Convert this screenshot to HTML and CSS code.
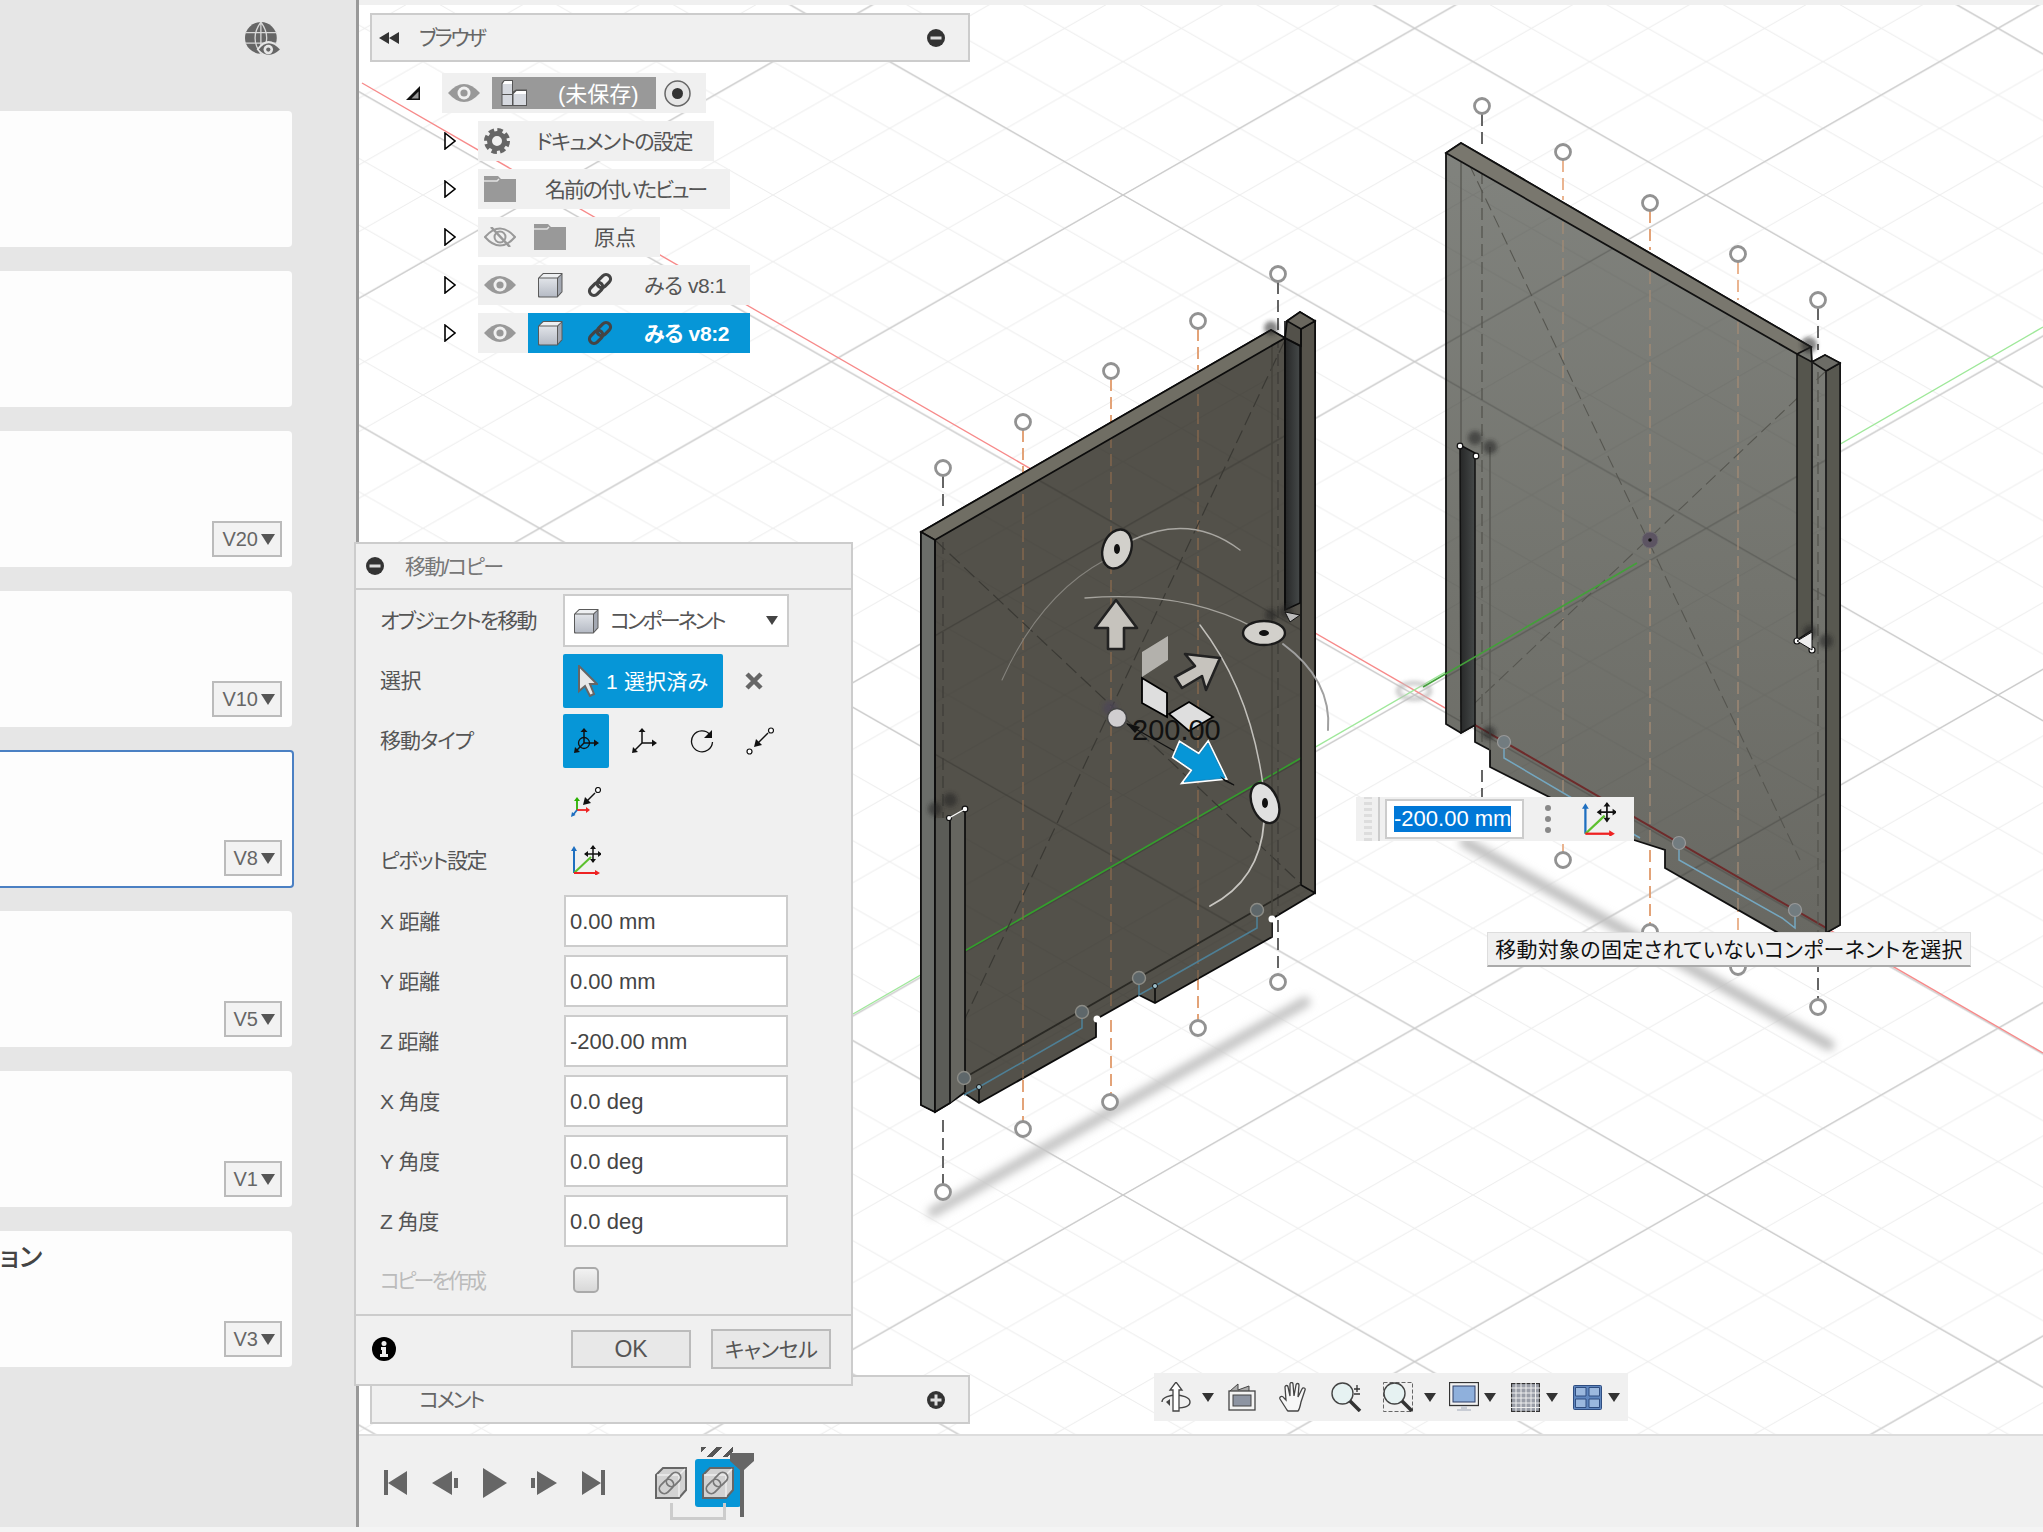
FILE: index.html
```html
<!DOCTYPE html>
<html lang="ja">
<head>
    <meta charset="UTF-8" />
    <title>移動/コピー</title>
    <link rel="stylesheet" href="styles.css">
</head>
<body>
<svg class="defs" width="0" height="0">
    <defs>
        <linearGradient id="cubeFront" x1="0" y1="0" x2="0" y2="1"><stop offset="0" stop-color="#e0e3e8"/><stop offset="1" stop-color="#b6bbc5"/></linearGradient>
        <symbol id="i-eye" viewBox="0 0 32 20"><path d="M0 10Q16-8 32 10Q16 28 0 10Z" fill="#999"/><circle cx="16" cy="10" r="6.5" fill="#f0f0f0"/><circle cx="16" cy="10" r="3.6" fill="#999"/></symbol>
        <symbol id="i-eye-off" viewBox="0 0 32 20"><path d="M1 10Q16-7 31 10Q16 27 1 10Z" fill="none" stroke="#999" stroke-width="2"/><circle cx="16" cy="10" r="5.5" fill="none" stroke="#999" stroke-width="2"/><path d="M7 0L26 20" stroke="#999" stroke-width="2.5"/></symbol>
        <symbol id="i-folder" viewBox="0 0 32 26"><path d="M0 26V0H14L17 3H32V26Z" fill="#999"/><path d="M0 5H13L15 3" fill="none" stroke="#e2e2e2" stroke-width="1.5"/></symbol>
        <symbol id="i-gear" viewBox="0 0 26 26"><circle cx="13" cy="13" r="11" fill="none" stroke="#666" stroke-width="4" stroke-dasharray="5.4 3.24"/><circle cx="13" cy="13" r="7.5" fill="none" stroke="#666" stroke-width="5"/></symbol>
        <symbol id="i-cube" viewBox="0 0 26 26"><path d="M1 6L6 1H25.500V20L20.500 25.500H2Q1 25.500 1 24.500Z" fill="#5a5a5a"/><path d="M2 6.500H20V24.500H3Q2 24.500 2 23.500Z" fill="url(#cubeFront)"/><path d="M2.800 5.500L6.500 2H24.200L20.300 5.500Z" fill="#eef0f2"/><path d="M21 6.200L24.500 2.800V19.500L21 23.500Z" fill="#a3a8b2"/></symbol>
        <symbol id="i-assy" viewBox="0 0 28 28"><path d="M1.500 4L4 1H13V12.500L16 10.500H27V27H1.500Z" fill="#555"/><path d="M2.500 5H12V15H2.500ZM2.500 16H12V26H2.500ZM13.500 15H26V26H13.500Z" fill="#d6d9df"/><path d="M2.500 5L4.500 2H12V5ZM13.500 15L16.500 12H26V15Z" fill="#fff"/></symbol>
        <symbol id="i-link" viewBox="0 0 26 26"><g transform="rotate(-45 13 13)" fill="none" stroke="#444" stroke-width="3.200"><rect x="0" y="8.500" width="15" height="9" rx="4.500"/><rect x="11" y="8.500" width="15" height="9" rx="4.500"/></g></symbol>
        <symbol id="i-minus" viewBox="0 0 20 20"><circle cx="10" cy="10" r="9" fill="#333"/><rect x="4.500" y="8.500" width="11" height="3" fill="#ddd"/></symbol>
        <symbol id="i-plus" viewBox="0 0 20 20"><circle cx="10" cy="10" r="9" fill="#333"/><path d="M4.500 10H15.500M10 4.500V15.500" stroke="#ddd" stroke-width="3"/></symbol>
        <symbol id="i-twist" viewBox="0 0 12 18"><path d="M1 1L11 9L1 17Z" fill="#fff" stroke="#000" stroke-width="1.600"/></symbol>
        <symbol id="i-pivot" viewBox="0 0 30 30"><path d="M3 28V4" stroke="#1e6fc0" stroke-width="2"/><path d="M0 6L3 1L6 6Z" fill="#1e6fc0"/><path d="M3 28L20 12" stroke="#5cc02e" stroke-width="2"/><path d="M3 28H26" stroke="#e22" stroke-width="2"/><path d="M24 25L29 28L24 31Z" fill="#e22"/><path d="M22 1V17M14 9H30" stroke="#111" stroke-width="1.500"/><path d="M22 0L25 4H19ZM22 18L25 14H19ZM13 9L17 6V12ZM31 9L27 6V12Z" fill="#111"/></symbol>
        <symbol id="i-tl" viewBox="0 0 32 32"><path d="M1 8L8 1H31V23L24 31H1Z" fill="#d2d2d2" stroke="#666" stroke-width="2"/><path d="M2 8H24V30M24 8L30 2" fill="none" stroke="#eee" stroke-width="1.500"/><g transform="rotate(-45 15 16)" fill="none" stroke="#777" stroke-width="1.800"><rect x="2" y="11" width="16" height="10" rx="5"/><rect x="12" y="11" width="16" height="10" rx="5"/></g></symbol>
    </defs>
</svg>

<div class="app">
    <div class="main">
        <aside class="sidebar">
            <div class="sidebar-top">
                <svg class="globe" width="36" height="36" viewBox="0 0 34 34">
                    <circle cx="15" cy="15" r="15" fill="#666"/>
                    <path d="M0 10H30M0 20H30M15 0V30M15 0Q4 15 15 30M15 0Q26 15 15 30" fill="none" stroke="#d8d8d8" stroke-width="1.200"/>
                    <path d="M11 26Q22 10 34 26Q22 38 11 26Z" fill="#e6e6e6"/>
                    <path d="M13 26Q22 14 33 26Q22 36 13 26Z" fill="#666"/>
                    <circle cx="22" cy="26" r="4.500" fill="#e6e6e6"/>
                    <circle cx="22" cy="26" r="2" fill="#666"/>
                </svg>
            </div>
            <div class="card"></div>
            <div class="card"></div>
            <div class="card"><span class="ver ver-wide">V20<i class="caret caret-ver"></i></span></div>
            <div class="card"><span class="ver ver-wide">V10<i class="caret caret-ver"></i></span></div>
            <div class="card card-active"><span class="ver">V8<i class="caret caret-ver"></i></span></div>
            <div class="card"><span class="ver">V5<i class="caret caret-ver"></i></span></div>
            <div class="card"><span class="ver">V1<i class="caret caret-ver"></i></span></div>
            <div class="card"><span class="card-title">ョン</span><span class="ver">V3<i class="caret caret-ver"></i></span></div>
        </aside>

        <div class="work">
            <div class="viewport">
                <svg class="scene" width="1684" height="1429" viewBox="359 5 1684 1429">
                    <defs>
                        <pattern id="gridMinor" patternUnits="userSpaceOnUse" x="1123" y="1195" width="116.667" height="66.667"><path d="M0 0L116.667 66.667M0 66.667L116.667 0" stroke="#ececec" stroke-width="1" fill="none"/></pattern>
                        <pattern id="gridMajor" patternUnits="userSpaceOnUse" x="1123" y="1195" width="583.333" height="333.333"><path d="M0 0L583.333 333.333M0 333.333L583.333 0" stroke="#cbcbcb" stroke-width="1.400" fill="none"/></pattern>
                        <pattern id="gridMinorDark" patternUnits="userSpaceOnUse" x="1123" y="1195" width="116.667" height="66.667"><path d="M0 0L116.667 66.667M0 66.667L116.667 0" stroke="#000" stroke-opacity=".05" fill="none"/></pattern>
                        <pattern id="gridMajorDark" patternUnits="userSpaceOnUse" x="1123" y="1195" width="583.333" height="333.333"><path d="M0 0L583.333 333.333M0 333.333L583.333 0" stroke="#000" stroke-opacity=".16" stroke-width="1.200" fill="none"/></pattern>
                        <linearGradient id="slotDark" x1="0" y1="0" x2="1" y2="0"><stop offset="0" stop-color="#262727"/><stop offset="1" stop-color="#454949"/></linearGradient>
                        <linearGradient id="rightFace" x1="0" y1="0" x2="0" y2="1"><stop offset="0" stop-color="#81837e"/><stop offset=".55" stop-color="#73746e"/><stop offset="1" stop-color="#686862"/></linearGradient>
                        <filter id="blur4" x="-20%" y="-20%" width="140%" height="140%"><feGaussianBlur stdDeviation="4"/></filter>
                        <filter id="blur2" x="-50%" y="-50%" width="200%" height="200%"><feGaussianBlur stdDeviation="2"/></filter>
                        <polygon id="leftShape" points="921,532 1271,330 1285,338 1287,321 1300,312 1315,321 1315,893 1275,917 1272,920 1272,937 1155,1003 1139,995 1100,1017 1096,1020 1096,1037 979,1103 964,1093 950,1103 935,1112 921,1105"/>
                        <polygon id="rightShape" points="1446,153 1461,143 1811,347 1812,362 1825,355 1840,363 1840,925 1800,947 1782,935 1665,868 1665,850 1634,840 1490,767 1490,750 1475,742 1475,725 1461,733 1446,724"/>
                        <clipPath id="leftClip"><use href="#leftShape"/></clipPath>
                        <clipPath id="rightClip"><use href="#rightShape"/></clipPath>
                        <g id="gridFaint"><rect x="359" y="0" width="1684" height="1434" fill="url(#gridMinorDark)"/><rect x="359" y="0" width="1684" height="1434" fill="url(#gridMajorDark)"/></g>
                        <g id="handle"><circle r="7.500" fill="#fff" stroke="#929292" stroke-width="2.800"/></g>
                    </defs>

                    <rect x="359" y="0" width="1684" height="1434" fill="#fff"/>
                    <rect x="359" y="0" width="1684" height="1434" fill="url(#gridMinor)"/>
                    <rect x="359" y="0" width="1684" height="1434" fill="url(#gridMajor)"/>

                    <!-- axes -->
                    <path d="M362 83L2043 1053" stroke="#f78a8a" stroke-width="1.400"/>
                    <path d="M853 1014L2043 327" stroke="#9fe89a" stroke-width="1.400"/>
                    <ellipse cx="1414" cy="691" rx="16" ry="8" fill="none" stroke="#bdbdbd" stroke-width="4" filter="url(#blur2)" opacity=".9"/>

                    <!-- shadows -->
                    <path d="M933 1212L1305 1002" stroke="#c4c4c4" stroke-width="11" stroke-linecap="round" filter="url(#blur4)"/>
                    <path d="M1465 842L1829 1045" stroke="#bdbdbd" stroke-width="11" stroke-linecap="round" filter="url(#blur4)"/>

                    <!-- dashed sketch lines, left body -->
                    <g fill="none" stroke-width="1.800" stroke-dasharray="12 6">
                        <path d="M943 476V510M943 1120V1184" stroke="#555"/>
                        <path d="M1023 430V480M1023 1080V1121" stroke="#e09a6a"/>
                        <path d="M1111 379V440M1111 1020V1094" stroke="#e09a6a"/>
                        <path d="M1198 329V370M1198 960V1020" stroke="#e09a6a"/>
                        <path d="M1278 282V330M1278 920V974" stroke="#555"/>
                    </g>
                    <!-- dashed sketch lines, right body -->
                    <g fill="none" stroke-width="1.800" stroke-dasharray="12 6">
                        <path d="M1482 114V150M1482 770V800" stroke="#555"/>
                        <path d="M1563 160V200M1563 790V852" stroke="#e8ad85"/>
                        <path d="M1650 211V250M1650 850V924" stroke="#e09a6a"/>
                        <path d="M1738 262V300M1738 900V960" stroke="#e8ad85"/>
                        <path d="M1818 308V350M1818 960V999" stroke="#555"/>
                    </g>
                    <use href="#handle" x="943" y="468"/><use href="#handle" x="1023" y="422"/><use href="#handle" x="1111" y="371"/><use href="#handle" x="1198" y="321"/><use href="#handle" x="1278" y="274"/>
                    <use href="#handle" x="943" y="1192"/><use href="#handle" x="1023" y="1129"/><use href="#handle" x="1110" y="1102"/><use href="#handle" x="1198" y="1028"/><use href="#handle" x="1278" y="982"/>
                    <use href="#handle" x="1482" y="106"/><use href="#handle" x="1563" y="152"/><use href="#handle" x="1650" y="203"/><use href="#handle" x="1738" y="254"/><use href="#handle" x="1818" y="300"/>
                    <use href="#handle" x="1563" y="860"/><use href="#handle" x="1650" y="932"/><use href="#handle" x="1738" y="967"/><use href="#handle" x="1818" y="1007"/>

                    <!-- right body -->
                    <use href="#rightShape" fill="url(#rightFace)" stroke="#111" stroke-width="1.800"/>
                    <g clip-path="url(#rightClip)">
                        <use href="#gridFaint"/>
                        <path d="M1475 725L1840 936" stroke="#6e2b2b" stroke-width="2"/>
                        <g fill="none" stroke-width="1.300" stroke-dasharray="12 6">
                            <path d="M1563 150V870M1650 200V940M1738 250V940" stroke="#a58c76"/>
                            <path d="M1482 100V780M1818 300V940" stroke="#55554f"/>
                        </g>
                        <path d="M1461 147L1800 860M1826 371L1460 717" fill="none" stroke="#565650" stroke-width="1.100" stroke-dasharray="13 6"/>
                        <path d="M1461 143V445M1490 447V750" stroke="#5b5b56" stroke-width="1.500"/>
                    </g>
                    <polygon points="1446,153 1461,143 1811,347 1797,354" fill="#79776e" stroke="#111" stroke-width="1.800"/>
                    <polygon points="1460,445 1475,453 1475,725 1461,733" fill="url(#slotDark)" stroke="#111" stroke-width="1.500"/>
                    <polygon points="1797,354 1812,362 1812,630 1797,640" fill="#55554d" stroke="#111" stroke-width="1.500"/>
                    <polygon points="1826,371 1840,363 1840,925 1826,933" fill="#585850" stroke="#111" stroke-width="1.500"/>
                    <polygon points="1812,362 1825,355 1840,363 1826,371" fill="#6c6c66" stroke="#111" stroke-width="1.500"/>
                    <path d="M1812 362V640M1826 371V933" stroke="#222" stroke-width="1.500"/>
                    <path d="M1423 687L1637 563" stroke="#43a03a" stroke-width="1.600"/>
                    <circle cx="1650" cy="540" r="8" fill="#5c5462" stroke="#6d6a70"/>
                    <circle cx="1650" cy="540" r="1.800" fill="#111"/>
                    <g fill="#222" opacity=".55" filter="url(#blur2)"><circle cx="1475" cy="438" r="7"/><circle cx="1490" cy="447" r="7"/><circle cx="1809" cy="345" r="8"/><circle cx="1810" cy="632" r="7"/><circle cx="1826" cy="641" r="7"/><circle cx="1489" cy="733" r="7"/></g>
                    <g fill="#fff" stroke="#111" stroke-width="1.200"><circle cx="1460" cy="446" r="2.800"/><circle cx="1476" cy="456" r="2.800"/><circle cx="1797" cy="641" r="3"/><circle cx="1812" cy="650" r="3"/></g>
                    <path d="M1797 641L1812 632L1812 650Z" fill="#eee" stroke="#111"/>
                    <path d="M1504 742V758L1640 838M1679 843V860L1782 918L1795 928V910" fill="none" stroke="#74a7c0" stroke-width="1.500"/>
                    <circle cx="1504" cy="742" r="6.500" fill="#727c80" stroke="#999" stroke-width="1.200"/>
                    <circle cx="1679" cy="843" r="6.500" fill="#727c80" stroke="#999" stroke-width="1.200"/>
                    <circle cx="1795" cy="910" r="6.500" fill="#727c80" stroke="#999" stroke-width="1.200"/>

                    <!-- left body -->
                    <use href="#leftShape" fill="#53514a" stroke="#0c0c0c" stroke-width="1.800"/>
                    <g clip-path="url(#leftClip)">
                        <use href="#gridFaint"/>
                        <path d="M921 976L1315 750" stroke="#33a02c" stroke-width="1.600"/>
                        <g fill="none" stroke-width="1.300" stroke-dasharray="12 6">
                            <path d="M1023 440V1100M1111 400V1040M1198 340V990" stroke="#8a6a4e"/>
                            <path d="M943 470V1150M1278 300V930" stroke="#3e3d38"/>
                        </g>
                        <path d="M935 540L1300 883M1285 340L935 1082" fill="none" stroke="#3a3934" stroke-width="1.200" stroke-dasharray="14 6"/>
                        <path d="M1300 885L964 1078" stroke="#2a2924" stroke-width="1.800"/>
                        <path d="M1272 330V1000" stroke="#45433d" stroke-width="1.500"/>
                    </g>
                    <polygon points="921,532 1271,330 1285,338 935,540" fill="#706e64" stroke="#0c0c0c" stroke-width="1.800"/>
                    <polygon points="921,532 935,540 935,1112 921,1105" fill="#6b6e6a" stroke="#0c0c0c" stroke-width="1.600"/>
                    <polygon points="935,818 950,818 950,1103 935,1112" fill="#5b5c57"/>
                    <polygon points="950,818 965,809 965,1090 950,1103" fill="#666660"/>
                    <path d="M935 540V1112L950 1103V818M965 809V1092" fill="none" stroke="#0c0c0c" stroke-width="1.700"/>
                    <polygon points="1285,338 1300,346 1300,603 1285,610" fill="url(#slotDark)" stroke="#0c0c0c" stroke-width="1.500"/>
                    <polygon points="1301,329 1315,321 1315,893 1301,885" fill="#57544c" stroke="#0c0c0c" stroke-width="1.600"/>
                    <polygon points="1287,321 1300,312 1315,321 1301,329" fill="#6a675e" stroke="#0c0c0c" stroke-width="1.600"/>
                    <path d="M1301 329V346L1285 338V321" fill="none" stroke="#0c0c0c" stroke-width="1.600"/>
                    <path d="M1285 338V610" stroke="#0c0c0c" stroke-width="1.800"/>
                    <path d="M979 1087V1103M1155 986V1003" stroke="#0c0c0c" stroke-width="1.600"/>
                    <path d="M964 1095L979 1087L1082 1028V1012M1139 978V995L1155 986L1257 928V910" fill="none" stroke="#4e7f95" stroke-width="1.600"/>
                    <g fill="#5e676a" stroke="#8c8c86" stroke-width="1.400"><circle cx="964" cy="1078" r="6.500"/><circle cx="1082" cy="1012" r="6.500"/><circle cx="1139" cy="978" r="6.500"/><circle cx="1257" cy="910" r="6.500"/></g>
                    <g fill="#9fc0cc" stroke="#111"><circle cx="979" cy="1087" r="2.500"/><circle cx="1155" cy="986" r="2.500"/></g>
                    <g fill="#fff"><circle cx="1097" cy="1019" r="3.500"/><circle cx="1272" cy="919" r="3.500"/></g>
                    <g fill="#222" opacity=".55" filter="url(#blur2)"><circle cx="1271" cy="328" r="7"/><circle cx="950" cy="800" r="7"/><circle cx="935" cy="809" r="7"/><circle cx="1286" cy="612" r="7"/><circle cx="1271" cy="615" r="6"/></g>
                    <g fill="#fff" stroke="#111" stroke-width="1.200"><circle cx="949" cy="818" r="2.500"/><circle cx="965" cy="809" r="2.800"/></g>
                    <path d="M949 818L965 809" stroke="#fff" stroke-width="1.400"/>
                    <path d="M1285 612L1300 615L1290 622Z" fill="#bbb" stroke="#111"/>

                    <!-- move gizmo -->
                    <g fill="none" stroke-linecap="round">
                        <path d="M1002 680Q1040 595 1105 560" stroke="#85837d" stroke-width="1.100"/>
                        <path d="M1130 541Q1190 512 1240 550" stroke="#a9a7a2" stroke-width="1.500"/>
                        <path d="M1085 598Q1185 590 1255 628" stroke="#a5a39d" stroke-width="1.400"/>
                        <path d="M1283 644Q1332 680 1328 730" stroke="#a0a0a0" stroke-width="2"/>
                        <path d="M1200 625Q1250 690 1263 785" stroke="#c2c0bb" stroke-width="1.500"/>
                        <path d="M1264 822Q1260 880 1210 906" stroke="#c8c6c1" stroke-width="1.800"/>
                    </g>
                    <g stroke="#1b1b1b" stroke-width="2.400" fill="#d2d0cb">
                        <ellipse cx="1117" cy="549" rx="14" ry="20" transform="rotate(20 1117 549)"/>
                        <ellipse cx="1264" cy="633" rx="21" ry="12"/>
                        <ellipse cx="1265" cy="803" rx="13" ry="21" transform="rotate(-22 1265 803)" fill="#e0e0e0"/>
                    </g>
                    <g fill="#111"><ellipse cx="1117" cy="549" rx="3" ry="5"/><ellipse cx="1264" cy="633" rx="5" ry="3"/><ellipse cx="1265" cy="803" rx="3" ry="5"/></g>
                    <polygon points="1116,600 1137,628 1124,628 1124,649 1108,649 1108,628 1095,628" fill="#c6c3bd" stroke="#222" stroke-width="2.600" stroke-linejoin="round"/>
                    <polygon points="1220,658 1185,654 1195,666 1175,677 1182,688 1202,676 1206,690" fill="#c6c3bd" stroke="#222" stroke-width="2.600" stroke-linejoin="round"/>
                    <polygon points="1142,652 1168,636 1168,660 1142,677" fill="#b3b1ac"/>
                    <polygon points="1142,678 1167,693 1167,717 1142,703" fill="#dedede" stroke="#000" stroke-width="1.800"/>
                    <polygon points="1169,714 1189,702 1213,717 1189,731" fill="#dedede" stroke="#000" stroke-width="1.800"/>
                    <circle cx="1110" cy="708" r="7" fill="#4d4757" opacity=".8" filter="url(#blur2)"/>
                    <circle cx="1117" cy="718" r="9.500" fill="#d0ced0" stroke="#444" stroke-width="1.500"/>
                    <path d="M1127 724L1234 785" stroke="#111" stroke-width="1.200"/>
                    <path d="M1126 723L1140 727L1135 733Z" fill="#111"/>
                    <text class="gizmo-label" x="1132" y="740">200.00</text>
                    <polygon points="1225,778 1208,743 1199,755 1180,743 1174,757 1193,770 1184,782" fill="#0696d7" stroke="#fff" stroke-width="4" paint-order="stroke"/>
                    <polygon points="1225,778 1208,743 1199,755 1180,743 1174,757 1193,770 1184,782" fill="none" stroke="#0b7cb4" stroke-width=".8"/>
                    <path d="M1220 776L1235 786L1224 781Z" fill="#111"/>
                </svg>
            </div>
            <div class="timeline">
                <svg class="tl-btn" width="24" height="26" viewBox="0 0 24 26"><path d="M0 0H4V25H0ZM23 1V25L4 13Z" fill="#666"/></svg>
                <svg class="tl-btn" width="27" height="26" viewBox="0 0 27 26"><path d="M0 13L20 1V25ZM22 8H26V18H22Z" fill="#666"/></svg>
                <svg class="tl-btn tl-play" width="24" height="30" viewBox="0 0 24 30"><path d="M0 0L24 15L0 30Z" fill="#666"/></svg>
                <svg class="tl-btn" width="27" height="26" viewBox="0 0 27 26"><path d="M0 8H4V18H0ZM6 1L26 13L6 25Z" fill="#666"/></svg>
                <svg class="tl-btn" width="24" height="26" viewBox="0 0 24 26"><path d="M0 1L19 13L0 25ZM19 0H23V25H19Z" fill="#666"/></svg>
                <svg class="tl-item" width="32" height="32"><use href="#i-tl"/></svg>
                <div class="tl-current"><svg width="32" height="32"><use href="#i-tl"/></svg></div>
                <div class="tl-hatch"></div>
                <svg class="tl-marker" width="24" height="64" viewBox="0 0 24 64"><path d="M0 0H24V8L14 17V64H10V17L0 8Z" fill="#666"/></svg>
                <div class="tl-bracket"></div>
            </div>
        </div>
    </div>

    <!-- browser panel -->
    <div class="browser">
        <div class="panel-head">
            <svg class="rewind" width="20" height="12" viewBox="0 0 20 12"><path d="M0 6L10 0V12ZM10 6L20 0V12Z" fill="#333"/></svg>
            <span class="panel-title">ブラウザ</span>
            <svg class="panel-toggle" width="20" height="20"><use href="#i-minus"/></svg>
        </div>
        <div class="tree">
            <div class="tree-row tree-root">
                <svg width="14" height="14" viewBox="0 0 14 14"><path d="M0 14L14 0V14Z" fill="#111"/><path d="M5.500 12.500L12.500 5.500V12.500Z" fill="#999"/></svg>
                <div class="pill pill-root">
                    <svg class="eye" width="32" height="20"><use href="#i-eye"/></svg>
                    <div class="root-name">
                        <svg width="28" height="28"><use href="#i-assy"/></svg>
                        <span class="root-text">(未保存)</span>
                    </div>
                    <svg class="radio" width="27" height="27" viewBox="0 0 27 27"><circle cx="13.500" cy="13.500" r="12.500" fill="#e6e6e6" stroke="#666" stroke-width="1.500"/><circle cx="13.500" cy="13.500" r="5.500" fill="#333"/></svg>
                </div>
            </div>
            <div class="tree-row">
                <svg width="12" height="18"><use href="#i-twist"/></svg>
                <div class="pill pill-doc">
                    <svg width="26" height="26"><use href="#i-gear"/></svg>
                    <span class="label label-doc">ドキュメントの設定</span>
                </div>
            </div>
            <div class="tree-row">
                <svg width="12" height="18"><use href="#i-twist"/></svg>
                <div class="pill pill-views">
                    <svg width="32" height="26"><use href="#i-folder"/></svg>
                    <span class="label label-views">名前の付いたビュー</span>
                </div>
            </div>
            <div class="tree-row">
                <svg width="12" height="18"><use href="#i-twist"/></svg>
                <div class="pill pill-origin">
                    <svg width="32" height="20"><use href="#i-eye-off"/></svg>
                    <svg class="folder-2" width="32" height="26"><use href="#i-folder"/></svg>
                    <span class="label label-origin">原点</span>
                </div>
            </div>
            <div class="tree-row">
                <svg width="12" height="18"><use href="#i-twist"/></svg>
                <div class="pill pill-comp">
                    <svg width="32" height="20"><use href="#i-eye"/></svg>
                    <div class="comp">
                        <svg width="26" height="26"><use href="#i-cube"/></svg>
                        <svg class="comp-link" width="26" height="26"><use href="#i-link"/></svg>
                        <span class="label label-comp">みる v8:1</span>
                    </div>
                </div>
            </div>
            <div class="tree-row">
                <svg width="12" height="18"><use href="#i-twist"/></svg>
                <div class="pill pill-comp">
                    <svg width="32" height="20"><use href="#i-eye"/></svg>
                    <div class="comp comp-selected">
                        <svg width="26" height="26"><use href="#i-cube"/></svg>
                        <svg class="comp-link" width="26" height="26"><use href="#i-link"/></svg>
                        <span class="label label-comp">みる v8:2</span>
                    </div>
                </div>
            </div>
        </div>
    </div>

    <!-- comment panel -->
    <div class="comments">
        <span class="comments-title">コメント</span>
        <svg class="panel-toggle" width="20" height="20"><use href="#i-plus"/></svg>
    </div>

    <!-- move dialog -->
    <div class="dialog">
        <div class="dialog-head">
            <svg width="20" height="20"><use href="#i-minus"/></svg>
            <span class="dialog-title">移動/コピー</span>
        </div>
        <div class="dialog-body">
            <div class="row row-object">
                <label class="row-label label-tight">オブジェクトを移動</label>
                <div class="select">
                    <svg width="26" height="26"><use href="#i-cube"/></svg>
                    <span class="select-text">コンポーネント</span>
                    <i class="caret caret-select"></i>
                </div>
            </div>
            <div class="row row-pick">
                <label class="row-label">選択</label>
                <div class="pick">
                    <svg width="20" height="32" viewBox="0 0 20 32"><path d="M1 1V26L7 21L12 31L16 29L12 19H19Z" fill="#e8e8e8" stroke="#666" stroke-width="2"/></svg>
                    <span class="pick-text">1 選択済み</span>
                </div>
                <svg class="pick-clear" width="18" height="18" viewBox="0 0 18 18"><path d="M2 2L16 16M16 2L2 16" stroke="#666" stroke-width="4.500"/></svg>
            </div>
            <div class="row row-type">
                <label class="row-label label-type">移動タイプ</label>
                <div class="types">
                    <div class="type type-on">
                        <svg width="26" height="26" viewBox="0 0 26 26"><circle cx="11" cy="15" r="5.500" fill="none" stroke="#111" stroke-width="1.300"/><path d="M11 15V3M11 15H23M11 15L3 23" stroke="#111" stroke-width="1.500"/><path d="M11 0L14.500 4H7.500ZM26 15L21 11.500V18.500ZM1 25L2 19L7 24Z" fill="#111"/></svg>
                    </div>
                    <div class="type">
                        <svg width="26" height="26" viewBox="0 0 26 26"><path d="M11 15V3M11 15H23M11 15L3 23" stroke="#111" stroke-width="1.500"/><path d="M11 0L14.500 4H7.500ZM26 15L21 11.500V18.500ZM1 25L2 19L7 24Z" fill="#111"/></svg>
                    </div>
                    <div class="type">
                        <svg width="24" height="24" viewBox="0 0 24 24"><path d="M20 5.500A10.500 10.500 0 1 0 22.500 13" fill="none" stroke="#111" stroke-width="1.300"/><path d="M22 1V9H14Z" fill="#111"/></svg>
                    </div>
                    <div class="type">
                        <svg width="28" height="28" viewBox="0 0 28 28"><circle cx="25" cy="3.500" r="2.500" fill="#fff" stroke="#111" stroke-width="1.200"/><circle cx="3.500" cy="24.500" r="2.500" fill="#fff" stroke="#111" stroke-width="1.200"/><path d="M22 6L12 16" stroke="#111" stroke-width="1.400"/><path d="M8 20L10 12L16 18Z" fill="#111"/></svg>
                    </div>
                </div>
            </div>
            <div class="row row-icon">
                <svg class="row-svg" width="30" height="30" viewBox="0 0 30 30"><circle cx="27" cy="3" r="2.500" fill="#fff" stroke="#111" stroke-width="1.200"/><path d="M24 6L16 14" stroke="#111" stroke-width="1.400"/><path d="M12 18L14 10L20 16Z" fill="#111"/><path d="M6 23V13" stroke="#2ab000" stroke-width="1.800"/><path d="M6 10L9 14H3Z" fill="#2ab000"/><path d="M6 23H17" stroke="#e22" stroke-width="1.800"/><path d="M19 23L15 20V26Z" fill="#e22"/><path d="M6 23L2 28" stroke="#1e6fc0" stroke-width="1.800"/><path d="M0 30L1 25L4.500 28Z" fill="#1e6fc0"/></svg>
            </div>
            <div class="row row-pivot">
                <label class="row-label label-pivot label-low">ピボット設定</label>
                <svg class="row-svg" width="30" height="30"><use href="#i-pivot"/></svg>
            </div>
            <div class="fields">
                <div class="row row-field"><label class="row-label label-low">X 距離</label><div class="field">0.00 mm</div></div>
                <div class="row row-field"><label class="row-label label-low">Y 距離</label><div class="field">0.00 mm</div></div>
                <div class="row row-field"><label class="row-label label-low">Z 距離</label><div class="field">-200.00 mm</div></div>
                <div class="row row-field"><label class="row-label label-low">X 角度</label><div class="field">0.0 deg</div></div>
                <div class="row row-field"><label class="row-label label-low">Y 角度</label><div class="field">0.0 deg</div></div>
                <div class="row row-field"><label class="row-label label-low">Z 角度</label><div class="field">0.0 deg</div></div>
            </div>
            <div class="row row-copy">
                <label class="row-label row-label-off label-low">コピーを作成</label>
                <div class="checkbox"></div>
            </div>
        </div>
        <div class="dialog-foot">
            <svg class="info" width="24" height="24" viewBox="0 0 24 24"><circle cx="12" cy="12" r="12" fill="#000"/><circle cx="12" cy="6.500" r="2.500" fill="#eee"/><path d="M9 10H14V17H16V20H8V17H10V13H9Z" fill="#eee"/></svg>
            <button class="btn btn-ok">OK</button>
            <button class="btn btn-cancel">キャンセル</button>
        </div>
    </div>

    <!-- value input next to the gizmo -->
    <div class="value-box">
        <div class="grip"></div>
        <div class="value-input"><span class="value-selected">-200.00 mm</span></div>
        <div class="dots"><i></i><i></i><i></i></div>
        <svg class="value-pivot" width="34" height="34"><use href="#i-pivot"/></svg>
    </div>

    <div class="tooltip">移動対象の固定されていないコンポーネントを選択</div>

    <!-- navigation bar -->
    <div class="navbar">
        <svg class="nav-icon" width="30" height="30" viewBox="0 0 30 30"><path d="M1 20C1 15 10 13 15 13S29 15 29 20S20 26 15 26" fill="none" stroke="#444" stroke-width="1.400"/><path d="M5 20L9 17V24Z" fill="#444"/><path d="M15 0L21 8H18V29H12V8H9Z" fill="#fff" stroke="#444" stroke-width="1.300"/></svg>
        <i class="caret caret-nav m-11"></i>
        <svg class="nav-icon m-14" width="28" height="28" viewBox="0 0 28 28"><path d="M2 8L10 1V7L21 3V8" fill="#aaa" stroke="#444"/><rect x="1" y="8" width="26" height="19" fill="#f3f3f3" stroke="#444" stroke-width="1.300"/><rect x="5" y="12" width="18" height="11" fill="#8d94a2" stroke="#444"/></svg>
        <svg class="nav-icon m-23" width="30" height="30" viewBox="0 0 30 30"><path d="M8 28L1 17C0 15 3 13 5 16L7 18L6 5C6 3 9 3 9 5L11 14L11 2C11 0 14 0 14 2L15 14L17 3C17 1 20 1 20 3L19 15L23 7C24 5 27 6 26 8L22 20C21 25 20 28 19 29H9Z" fill="#f7f7f7" stroke="#444" stroke-width="1.300"/></svg>
        <svg class="nav-icon m-22" width="31" height="30" viewBox="0 0 31 30"><circle cx="11.500" cy="11.500" r="10.500" fill="#e6f2f2" stroke="#444" stroke-width="1.400"/><path d="M19 19L29 29" stroke="#333" stroke-width="3.500"/><path d="M26 3V10M23 7H29M23 12H29" stroke="#333" stroke-width="1.300"/></svg>
        <svg class="nav-icon m-21" width="30" height="30" viewBox="0 0 30 30"><rect x="0.500" y="0.500" width="29" height="29" fill="none" stroke="#666" stroke-dasharray="4 2"/><circle cx="11.500" cy="11.500" r="10.500" fill="#e6f2f2" stroke="#444" stroke-width="1.400"/><path d="M19 19L29 29" stroke="#333" stroke-width="3.500"/></svg>
        <i class="caret caret-nav m-11"></i>
        <svg class="nav-icon m-13" width="30" height="30" viewBox="0 0 30 30"><rect x="0.500" y="0.500" width="29" height="23" fill="#f2f2f2" stroke="#333" stroke-width="1.300"/><rect x="4" y="4" width="22" height="16" fill="#8fb0dc" stroke="#2f3f66"/><path d="M12 24H18V27H22V29H8V27H12Z" fill="#c8ccd4"/></svg>
        <i class="caret caret-nav m-5"></i>
        <svg class="nav-icon m-15" width="29" height="29" viewBox="0 0 29 29"><rect x="0.500" y="0.500" width="28" height="28" fill="#9a9ea8" stroke="#333" stroke-width="1.200"/><path d="M5 0V29M10 0V29M15 0V29M20 0V29M24.500 0V29M0 5H29M0 10H29M0 15H29M0 20H29M0 24.500H29" stroke="#efefef"/></svg>
        <i class="caret caret-nav m-6"></i>
        <svg class="nav-icon m-15" width="29" height="25" viewBox="0 0 29 25"><rect x="0.500" y="0.500" width="28" height="24" rx="1" fill="#5f86be" stroke="#2f4d80"/><path d="M2.500 2.500H13V11H2.500ZM16 2.500H26.500V11H16ZM2.500 14H13V22.500H2.500ZM16 14H26.500V22.500H16Z" fill="#9bb8de" stroke="#2f4d80"/></svg>
        <i class="caret caret-nav m-6"></i>
    </div>
</div>
</body>
</html>
```

FILE: styles.css
```css
html, body {
    margin: 0;
    padding: 0;
}
body {
    font-family: "Liberation Sans", "Noto Sans CJK JP", sans-serif;
    font-feature-settings: "palt";
    color: #555;
    overflow: hidden;
}
svg {
    display: block;
    flex-shrink: 0;
}
.defs {
    position: absolute;
}
.app {
    position: relative;
    width: 2043px;
    height: 1532px;
    background: #f4f4f4;
    overflow: hidden;
}
.main {
    display: flex;
    height: 1527px;
}

/* sidebar */
.sidebar {
    width: 356px;
    box-sizing: content-box;
    flex-shrink: 0;
    background: #e6e6e6;
    border-right: 3px solid #999;
    padding-right: 0;
    overflow: hidden;
}
.sidebar-top {
    height: 111px;
    display: flex;
    justify-content: flex-end;
    padding-right: 75px;
    padding-top: 22px;
    box-sizing: border-box;
}
.card {
    width: 292px;
    height: 136px;
    margin-bottom: 24px;
    background: #fdfdfd;
    border-radius: 0 4px 4px 0;
    box-sizing: border-box;
    padding: 0 10px 10px 0;
    display: flex;
    justify-content: flex-end;
    align-items: flex-end;
}
.card-active {
    width: 294px;
    height: 138px;
    margin-top: -1px;
    margin-bottom: 23px;
    border: 2px solid #4b80c3;
    border-left: none;
}
.card-title {
    align-self: flex-start;
    margin-right: auto;
    margin-top: 5px;
    font-size: 26px;
    color: #444;
    font-weight: 500;
}
.ver {
    width: 58px;
    height: 36px;
    box-sizing: border-box;
    border: 2px solid #bbb;
    background: #f2f2f2;
    font-size: 20px;
    color: #666;
    display: flex;
    align-items: center;
    justify-content: flex-end;
    padding-right: 5px;
    gap: 3px;
}
.ver-wide {
    width: 70px;
}
.caret {
    display: block;
    width: 0;
    height: 0;
    border-left: 6px solid transparent;
    border-right: 6px solid transparent;
    border-top: 9px solid #444;
    flex-shrink: 0;
}
.caret-ver {
    border-left-width: 7px;
    border-right-width: 7px;
    border-top: 11px solid #555;
}

/* viewport and timeline */
.work {
    flex: 1;
    display: flex;
    flex-direction: column;
}
.viewport {
    height: 1429px;
    border-top: 5px solid #f0f0f0;
    border-bottom: 2px solid #ddd;
    background: #fff;
}
.timeline {
    flex: 1;
    background: #f0f0f0;
    display: flex;
    align-items: center;
    padding-left: 25px;
    position: relative;
}
.tl-btn {
    margin-right: 24px;
    margin-top: 3px;
}
.tl-play {
    margin-right: 24px;
}
.tl-item {
    margin-left: 25px;
    margin-top: 2px;
}
.tl-current {
    width: 46px;
    height: 48px;
    margin-left: 8px;
    margin-top: 2px;
    background: #0696d7;
    border-radius: 3px;
    display: flex;
    align-items: center;
    justify-content: center;
}
.tl-hatch {
    position: absolute;
    left: 342px;
    top: 11px;
    width: 32px;
    height: 10px;
    background: repeating-linear-gradient(135deg, #555 0 4px, transparent 4px 11px);
}
.tl-marker {
    position: absolute;
    left: 371px;
    top: 17px;
}
.tl-bracket {
    position: absolute;
    left: 311px;
    top: 67px;
    width: 50px;
    height: 14px;
    border: 3px solid #ccc;
    border-top: none;
}

/* browser panel */
.browser {
    position: absolute;
    left: 370px;
    top: 13px;
    width: 600px;
}
.panel-head {
    height: 49px;
    box-sizing: border-box;
    background: #f0f0f0;
    border: 2px solid #ccc;
    display: flex;
    align-items: center;
    padding: 0 22px 0 7px;
}
.panel-title {
    margin-left: 20px;
    padding-bottom: 3px;
    font-size: 21px;
    letter-spacing: -2.6px;
    color: #666;
    flex: 1;
}
.tree {
    display: flex;
    flex-direction: column;
    gap: 8px;
    margin-top: 11px;
    padding-left: 74px;
}
.tree-row {
    display: flex;
    align-items: center;
    height: 40px;
    gap: 22px;
}
.tree-root {
    margin-left: -38px;
    gap: 22px;
}
.pill {
    height: 40px;
    background: #f0f0f0;
    display: flex;
    align-items: center;
    padding-left: 6px;
    box-sizing: border-box;
}
.pill-root {
    width: 264px;
    padding-left: 6px;
}
.root-name {
    width: 164px;
    height: 32px;
    margin-left: 12px;
    background: #999;
    display: flex;
    align-items: center;
    padding-left: 8px;
    box-sizing: border-box;
}
.root-text {
    margin-left: 30px;
    padding-bottom: 2px;
    font-size: 22px;
    color: #fff;
}
.radio {
    margin-left: 8px;
}
.pill-doc {
    width: 236px;
}
.pill-views {
    width: 252px;
}
.pill-origin {
    width: 182px;
}
.pill-comp {
    width: 272px;
}
.label {
    font-size: 21px;
    color: #555;
    white-space: nowrap;
    padding-bottom: 2px;
}
.label-doc {
    margin-left: 26px;
    letter-spacing: -1.5px;
}
.label-views {
    margin-left: 29px;
    letter-spacing: -2.2px;
}
.label-origin {
    margin-left: 28px;
}
.folder-2 {
    margin-left: 18px;
}
.comp {
    width: 222px;
    height: 40px;
    margin-left: 12px;
    padding-left: 9px;
    box-sizing: border-box;
    display: flex;
    align-items: center;
}
.comp-selected {
    background: #0696d7;
}
.comp-selected .label {
    color: #fff;
    font-weight: 700;
}
.comp-link {
    margin-left: 24px;
}
.label-comp {
    margin-left: 31px;
    letter-spacing: -.4px;
}

/* comment panel */
.comments {
    position: absolute;
    left: 370px;
    top: 1375px;
    width: 600px;
    height: 49px;
    box-sizing: border-box;
    background: #f0f0f0;
    border: 2px solid #ccc;
    display: flex;
    align-items: center;
    justify-content: space-between;
    padding: 0 22px 0 47px;
}
.comments-title {
    font-size: 21px;
    letter-spacing: -2.3px;
    color: #666;
    padding-bottom: 3px;
}

/* dialog */
.dialog {
    position: absolute;
    left: 354px;
    top: 542px;
    width: 499px;
    height: 844px;
    background: #f0f0f0;
    border: 2px solid #ccc;
    box-sizing: border-box;
    display: flex;
    flex-direction: column;
}
.dialog-head {
    height: 46px;
    flex-shrink: 0;
    border-bottom: 2px solid #ccc;
    display: flex;
    align-items: center;
    padding-left: 9px;
    box-sizing: border-box;
}
.dialog-title {
    margin-left: 20px;
    padding-bottom: 3px;
    font-size: 21px;
    letter-spacing: -1.8px;
    color: #777;
}
.dialog-body {
    height: 724px;
    flex-shrink: 0;
    padding: 4px 0 0 24px;
    box-sizing: border-box;
}
.row {
    display: flex;
    align-items: center;
}
.row-label {
    width: 183px;
    padding-bottom: 4px;
    flex-shrink: 0;
    font-size: 21px;
    letter-spacing: -.5px;
    color: #555;
    white-space: nowrap;
}
.label-low {
    padding-bottom: 2px;
}
.label-tight {
    letter-spacing: -1.8px;
}
.label-type {
    letter-spacing: -1px;
}
.label-pivot {
    letter-spacing: -1.4px;
}
.row-label-off {
    color: #bbb;
    letter-spacing: -2.9px;
}
.row-object {
    height: 53px;
}
.select {
    width: 226px;
    height: 53px;
    box-sizing: border-box;
    background: #fff;
    border: 2px solid #ccc;
    display: flex;
    align-items: center;
    padding-left: 8px;
}
.select-text {
    margin-left: 11px;
    padding-bottom: 3px;
    font-size: 21px;
    letter-spacing: -3px;
    color: #555;
    flex: 1;
}
.caret-select {
    margin-right: 9px;
}
.row-pick {
    height: 54px;
    margin-top: 7px;
}
.pick {
    width: 160px;
    height: 54px;
    background: #0696d7;
    border-radius: 2px;
    display: flex;
    align-items: center;
    padding-left: 15px;
    box-sizing: border-box;
}
.pick-text {
    margin-left: 8px;
    padding-bottom: 2px;
    font-size: 21px;
    color: #fff;
    letter-spacing: .2px;
    white-space: nowrap;
}
.pick-clear {
    margin-left: 22px;
}
.row-type {
    height: 54px;
    margin-top: 6px;
}
.types {
    display: flex;
    gap: 12px;
}
.type {
    width: 46px;
    height: 54px;
    display: flex;
    align-items: center;
    justify-content: center;
    border-radius: 2px;
}
.type-on {
    background: #0696d7;
}
.row-icon {
    height: 44px;
    margin-top: 12px;
    padding-left: 183px;
}
.row-pivot {
    height: 44px;
    margin-top: 14px;
}
.row-svg {
    margin-left: 8px;
}
.fields {
    margin-top: 13px;
    display: flex;
    flex-direction: column;
    gap: 8px;
}
.row-field {
    height: 52px;
}
.field {
    width: 224px;
    height: 52px;
    margin-left: 1px;
    box-sizing: border-box;
    background: #fff;
    border: 2px solid #ccc;
    display: flex;
    align-items: center;
    padding: 2px 0 0 4px;
    font-size: 22px;
    color: #444;
}
.row-copy {
    height: 26px;
    margin-top: 20px;
}
.checkbox {
    width: 26px;
    height: 26px;
    margin-left: 10px;
    box-sizing: border-box;
    border: 2px solid #aaa;
    border-radius: 5px;
    background: linear-gradient(#f2f2f2, #d8d8d8);
}
.dialog-foot {
    flex: 1;
    border-top: 2px solid #ccc;
    display: flex;
    align-items: center;
    padding: 0 20px 2px 16px;
}
.info {
    margin-right: auto;
}
.btn {
    width: 120px;
    height: 38px;
    padding: 0;
    box-sizing: border-box;
    background: #e8e8e8;
    border: 2px solid #bbb;
    color: #555;
    font-family: inherit;
    font-feature-settings: "palt";
    font-size: 23px;
    line-height: 1;
}
.btn-cancel {
    margin-left: 20px;
    font-size: 21px;
    letter-spacing: -.5px;
    height: 40px;
}

/* value box */
.value-box {
    position: absolute;
    left: 1356px;
    top: 797px;
    width: 278px;
    height: 44px;
    background: #f0f0f0;
    display: flex;
    align-items: center;
}
.grip {
    width: 24px;
    height: 44px;
    margin-right: 5px;
    box-sizing: border-box;
    border-right: 2px solid #ccc;
    background: repeating-linear-gradient(0deg, #ddd 0 3px, transparent 3px 6px) 8px 0 / 8px 100% no-repeat;
}
.value-input {
    width: 139px;
    height: 40px;
    box-sizing: border-box;
    background: #fff;
    border: 2px solid #ccc;
    display: flex;
    align-items: center;
    padding-left: 7px;
}
.value-selected {
    background: #0078d7;
    color: #fff;
    font-size: 22px;
    line-height: 26px;
    white-space: nowrap;
}
.dots {
    display: flex;
    flex-direction: column;
    gap: 5px;
    margin-left: 21px;
}
.dots i {
    display: block;
    width: 6px;
    height: 6px;
    border-radius: 50%;
    background: #888;
}
.value-pivot {
    margin-left: 31px;
}

/* tooltip */
.tooltip {
    position: absolute;
    left: 1487px;
    top: 932px;
    width: 484px;
    height: 35px;
    padding-bottom: 3px;
    box-sizing: border-box;
    background: #f0f0f0;
    border-top: 1px solid #ddd;
    border-right: 1px solid #ddd;
    border-left: 1px solid #ddd;
    border-bottom: 2px solid #aaa;
    display: flex;
    align-items: center;
    justify-content: center;
    font-size: 21px;
    color: #111;
    white-space: nowrap;
    letter-spacing: .3px;
}

/* nav bar */
.navbar {
    position: absolute;
    left: 1154px;
    top: 1373px;
    width: 474px;
    height: 48px;
    background: #f0f0f0;
    display: flex;
    align-items: center;
    padding-left: 7px;
    box-sizing: border-box;
}
.caret-nav {
    border-top-color: #333;
}
.m-5 { margin-left: 5px; }
.m-6 { margin-left: 6px; }
.m-11 { margin-left: 11px; }
.m-13 { margin-left: 13px; }
.m-14 { margin-left: 14px; }
.m-15 { margin-left: 15px; }
.m-21 { margin-left: 21px; }
.m-22 { margin-left: 22px; }
.m-23 { margin-left: 23px; }

/* 3d scene */
.gizmo-label {
    font-family: "Liberation Sans", sans-serif;
    font-size: 29px;
    fill: #111;
}
```
